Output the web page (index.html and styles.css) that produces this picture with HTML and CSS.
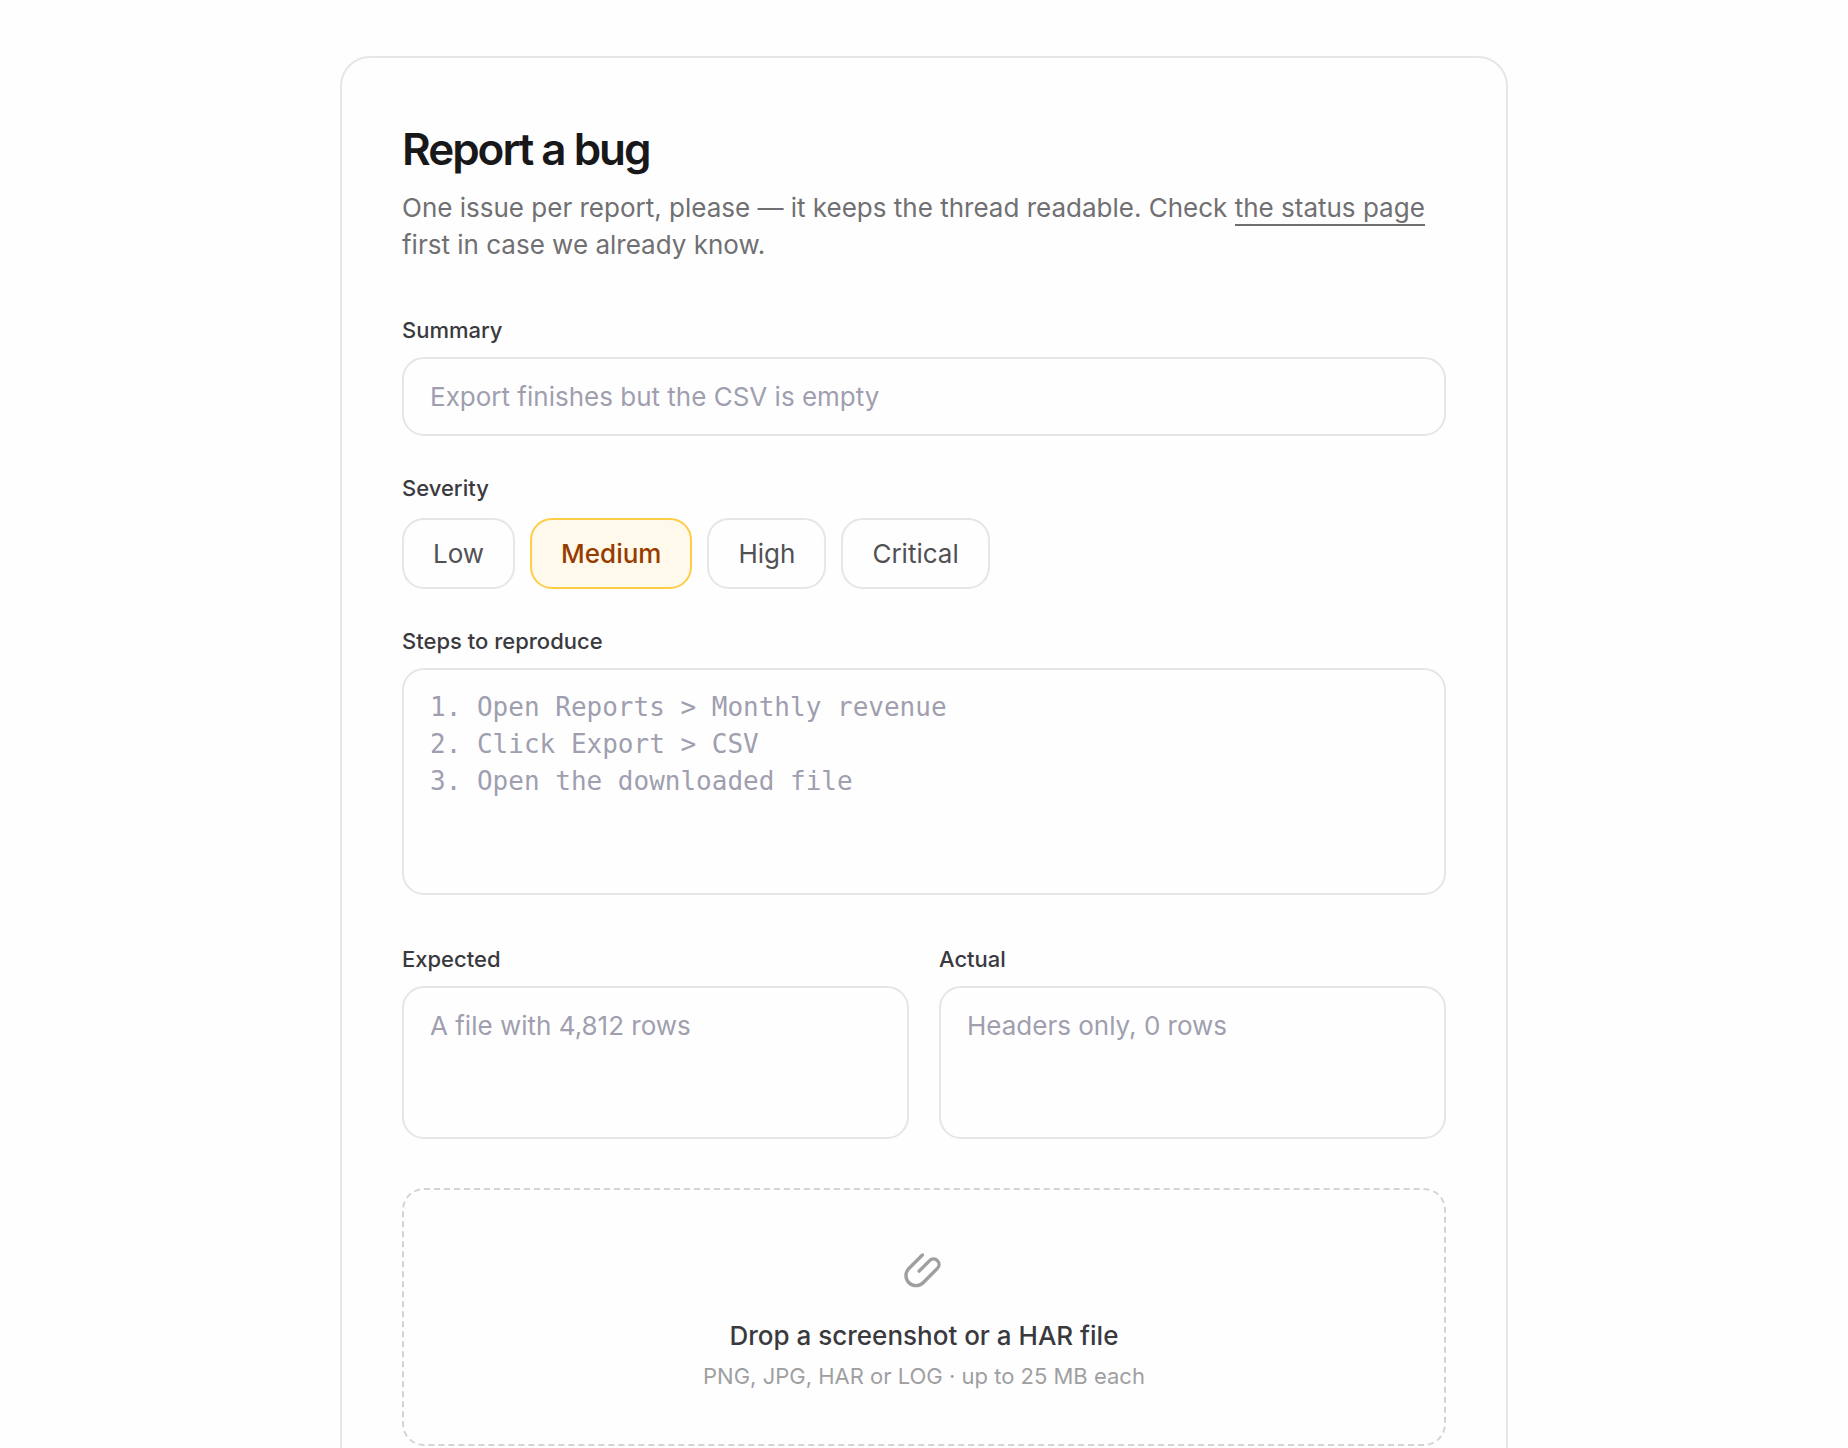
FILE: index.html
```html
<!DOCTYPE html>
<html lang="en">
<head>
    <meta charset="UTF-8">
    <meta name="viewport" content="width=device-width, initial-scale=1.0">
    <title>Report a bug</title>
    <link rel="stylesheet" href="styles.css">
</head>
<body>
    <form class="card">
        <div class="card-header">
            <h1>Report a bug</h1>
            <p>One issue per report, please — it keeps the thread readable. Check <a href="#">the status page</a> first in case we already know.</p>
        </div>

        <div class="field">
            <label for="summary">Summary</label>
            <input type="text" id="summary" class="control" placeholder="Export finishes but the CSV is empty">
        </div>

        <fieldset class="severity">
            <legend>Severity</legend>
            <div class="chips">
                <label class="chip"><input type="radio" name="severity" value="low">Low</label>
                <label class="chip"><input type="radio" name="severity" value="medium" checked>Medium</label>
                <label class="chip"><input type="radio" name="severity" value="high">High</label>
                <label class="chip"><input type="radio" name="severity" value="critical">Critical</label>
            </div>
        </fieldset>

        <div class="field">
            <label for="steps">Steps to reproduce</label>
            <textarea id="steps" class="control mono" rows="5" placeholder="1. Open Reports > Monthly revenue
2. Click Export > CSV
3. Open the downloaded file"></textarea>
        </div>

        <div class="columns">
            <div class="field">
                <label for="expected">Expected</label>
                <textarea id="expected" class="control" rows="3" placeholder="A file with 4,812 rows"></textarea>
            </div>
            <div class="field">
                <label for="actual">Actual</label>
                <textarea id="actual" class="control" rows="3" placeholder="Headers only, 0 rows"></textarea>
            </div>
        </div>

        <label class="dropzone">
            <input type="file" multiple>
            <svg class="clip" viewBox="0 0 40 40" fill="none" stroke="currentColor" stroke-width="3.4" stroke-linecap="round" stroke-linejoin="round" aria-hidden="true">
                <path d="M18.4 3 L4.9 16.5 A10 10 0 0 0 19.1 30.7 L33.4 16.4 A5.5 5.5 0 0 0 25.6 8.6 L15.1 19.1"/>
            </svg>
            <span class="drop-title">Drop a screenshot or a HAR file</span>
            <span class="drop-hint">PNG, JPG, HAR or LOG · up to 25 MB each</span>
        </label>
    </form>
</body>
</html>
```
FILE: styles.css
```css
* {
    margin: 0;
    padding: 0;
    box-sizing: border-box;
}

body {
    font-family: Inter, "Liberation Sans", sans-serif;
    font-size: 26px;
    line-height: 37px;
    color: #3a3a3e;
    background: #fefefe;
    padding: 56px 24px;
}

.card {
    display: flex;
    flex-direction: column;
    gap: 37px;
    max-width: 1168px;
    margin: 0 auto;
    padding: 60px;
    border: 2px solid #e6e5e8;
    border-radius: 30px;
}

/* Header */
.card-header {
    margin-bottom: 15px;
}

.card-header h1 {
    font-size: 44px;
    font-weight: 600;
    line-height: 62px;
    letter-spacing: -2px;
    color: #18181b;
    margin-bottom: 9px;
}

.card-header p {
    color: #707073;
}

.card-header a {
    color: inherit;
    text-decoration: none;
    border-bottom: 2px solid #707073;
    padding-bottom: 1px;
}

/* Fields */
.field {
    display: flex;
    flex-direction: column;
    gap: 12px;
}

.field label,
.severity legend {
    font-size: 22px;
    font-weight: 500;
    line-height: 30px;
}

.control {
    display: block;
    width: 100%;
    padding: 19px 26px;
    font: inherit;
    color: #3a3a3e;
    background: transparent;
    border: 2px solid #e6e5e8;
    border-radius: 22px;
    outline: none;
}

.control::placeholder {
    color: #9f9fb0;
    opacity: 1;
}

textarea.control {
    margin-bottom: 12px;
    resize: none;
}

.control.mono {
    font-family: "DejaVu Sans Mono", monospace;
}

.columns {
    display: grid;
    grid-template-columns: 1fr 1fr;
    gap: 30px;
}

/* Severity */
.severity {
    border: none;
}

.severity legend {
    margin-bottom: 15px;
}

.chips {
    display: flex;
    flex-wrap: wrap;
    gap: 15px;
}

.chip {
    position: relative;
    padding: 15px 29px;
    color: #515154;
    border: 2px solid #e6e5e8;
    border-radius: 22px;
    cursor: pointer;
}

.chip input {
    position: absolute;
    opacity: 0;
}

.chip:has(input:checked) {
    color: #973c00;
    font-weight: 500;
    background: #fff9eb;
    border-color: #ffcd45;
}

/* Dropzone */
.dropzone {
    position: relative;
    display: flex;
    flex-direction: column;
    align-items: center;
    padding: 62px 30px 53px;
    border: 2px dashed #d4d4d6;
    border-radius: 22px;
    cursor: pointer;
}

.dropzone input {
    position: absolute;
    opacity: 0;
    pointer-events: none;
}

.clip {
    width: 40px;
    height: 40px;
    color: #9f9fa2;
    margin-bottom: 25px;
}

.drop-title {
    font-weight: 500;
    margin-bottom: 7px;
}

.drop-hint {
    font-size: 22px;
    line-height: 30px;
    color: #9f9fa2;
}
```
